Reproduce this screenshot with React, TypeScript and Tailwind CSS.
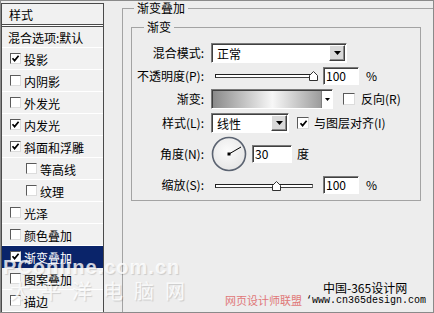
import type { ReactNode } from 'react';

type Row = { label: string; on?: boolean; sub?: boolean; active?: boolean };

const rows: Row[] = [
  { label: '投影', on: true },
  { label: '内阴影' },
  { label: '外发光' },
  { label: '内发光', on: true },
  { label: '斜面和浮雕', on: true },
  { label: '等高线', sub: true },
  { label: '纹理', sub: true },
  { label: '光泽' },
  { label: '颜色叠加' },
  { label: '渐变叠加', on: true, active: true },
  { label: '图案叠加' },
  { label: '描边' },
];

function Check({ on, big }: { on?: boolean; big?: boolean }) {
  return (
    <span
      className={`flex shrink-0 items-center justify-center border border-t-[#5a5a5a] border-l-[#5a5a5a] border-r-[#dcdcdc] border-b-[#dcdcdc] bg-white ${
        big ? 'h-[12px] w-[12px]' : 'h-[11px] w-[11px]'
      }`}
    >
      {on && (
        <svg viewBox="0 0 9 9" className="h-[9px] w-[9px]">
          <path d="M1.5 4.2 L3.6 6.6 L7.6 1.8" fill="none" stroke="#000" strokeWidth="1.7" />
        </svg>
      )}
    </span>
  );
}

function Arrow() {
  return (
    <svg viewBox="0 0 7 4" className="h-[4px] w-[7px]">
      <path d="M0 0 H7 L3.5 4 Z" fill="#000" />
    </svg>
  );
}

function Combo({ text, width }: { text: string; width: string }) {
  return (
    <div
      className={`flex h-[20px] ${width} border border-t-[#7a7a7a] border-l-[#7a7a7a] border-r-white border-b-white bg-white shadow-[inset_1px_1px_0_#404040]`}
    >
      <span className="flex flex-1 items-center pl-[5px] pt-[1px]">{text}</span>
      <span className="mt-[1px] mr-[1px] mb-[1px] flex w-[16px] items-center justify-center border border-t-white border-l-white border-r-[#404040] border-b-[#404040] bg-[#d9d9d9] shadow-[inset_-1px_-1px_0_#8a8a8a]">
        <Arrow />
      </span>
    </div>
  );
}

function Field({ text, width }: { text: string; width: string }) {
  return (
    <div
      className={`flex h-[18px] ${width} items-center border border-t-[#7a7a7a] border-l-[#7a7a7a] border-r-white border-b-white bg-white pl-[2px] shadow-[inset_1px_1px_0_#404040]`}
    >
      {text}
    </div>
  );
}

function Slider({ pos }: { pos: number }) {
  return (
    <div className="relative h-full w-[108px]">
      <div className="absolute top-[8px] left-[4px] h-[4px] w-[98px] border border-t-[#202020] border-l-[#202020] border-r-[#707070] border-b-[#404040] bg-white" />
      <svg viewBox="0 0 9 10" className="absolute top-[5px] h-[10px] w-[9px]" style={{ left: pos }}>
        <path d="M4.5 0.5 L8.5 4.5 V9.5 H0.5 V4.5 Z" fill="#fff" stroke="#303030" strokeWidth="1" />
      </svg>
    </div>
  );
}

function FormRow({ label, className, children }: { label: string; className: string; children: ReactNode }) {
  return (
    <div className={`flex items-center ${className}`}>
      <span className="w-[73px] shrink-0 pr-[1px] text-right">{label}</span>
      <div className="ml-[6px] flex h-full items-center">{children}</div>
    </div>
  );
}

export default function App() {
  return (
    <div className='relative flex h-[313px] w-[434px] overflow-hidden border border-[#8a8a8a] bg-[#ededed] font-["Noto_Sans_CJK_SC",sans-serif] text-[12px] leading-[14px] text-black'>
      {/* style list */}
      <div className="mt-[2px] flex w-[103px] shrink-0 flex-col border-t border-l border-r border-[#4a4a4a] bg-[#f1f1f1]">
        <div className="flex h-[21px] items-center pt-[1px] pl-[7px]">样式</div>
        <div className="h-[3px] border-y border-[#4a4a4a] bg-white" />
        <div className="flex h-[22px] items-center border-b border-white pt-[2px] pl-[6px]">混合选项:默认</div>
        {rows.map((r) => (
          <div
            key={r.label}
            className={`flex h-[22px] shrink-0 items-center gap-[3px] border-b ${
              r.active ? 'border-[#0a246a] bg-[#0a246a] text-white' : 'border-white'
            } ${r.sub ? 'pl-[24px]' : 'pl-[8px]'}`}
          >
            <Check on={r.on} />
            <span className="pt-[2px]">{r.label}</span>
          </div>
        ))}
      </div>

      {/* options */}
      <div className="flex-1 pl-[18px]">
        <fieldset className="h-[330px] border-t border-l border-[#a3a3a3]">
          <legend className="ml-[11px] px-[3px] leading-[14px]">渐变叠加</legend>
          <fieldset className="mt-[5px] ml-[8px] w-[290px] border border-[#a3a3a3] pb-[6px]">
            <legend className="ml-[12px] px-[3px] leading-[14px]">渐变</legend>

            <FormRow label="混合模式:" className="mt-[9px] h-[20px]">
              <Combo text="正常" width="w-[136px]" />
            </FormRow>

            <FormRow label="不透明度(P):" className="mt-[3px] h-[19px]">
              <Slider pos={98} />
              <div className="ml-[4px]">
                <Field text="100" width="w-[36px]" />
              </div>
              <span className="ml-[7px]">%</span>
            </FormRow>

            <FormRow label="渐变:" className="mt-[4px] h-[20px]">
              <div className="flex h-[20px] w-[122px] border border-t-[#7a7a7a] border-l-[#7a7a7a] border-r-white border-b-white bg-white shadow-[inset_1px_1px_0_#404040]">
                <div className="mt-[1px] ml-[1px] flex-1 bg-[linear-gradient(to_right,#8a8a8a,#f7f7f7_55%,#9c9c9c)]" />
                <div className="mt-[1px] flex w-[11px] items-center justify-center border-l border-[#808080] bg-white">
                  <svg viewBox="0 0 5 3" className="h-[3px] w-[5px]">
                    <path d="M0 0 H5 L2.5 3 Z" fill="#000" />
                  </svg>
                </div>
              </div>
              <span className="ml-[10px]">
                <Check big />
              </span>
              <span className="ml-[6px]">反向(R)</span>
            </FormRow>

            <FormRow label="样式(L):" className="mt-[4px] h-[20px]">
              <Combo text="线性" width="w-[78px]" />
              <span className="ml-[8px]">
                <Check on big />
              </span>
              <span className="ml-[5px]">与图层对齐(I)</span>
            </FormRow>

            <FormRow label="角度(N):" className="mt-[3px] h-[36px]">
              <svg viewBox="0 0 36 36" className="h-[36px] w-[36px]">
                <defs>
                  <radialGradient id="dial" cx="0.45" cy="0.4" r="0.6">
                    <stop offset="0" stopColor="#fbfbfb" />
                    <stop offset="1" stopColor="#e6e6e6" />
                  </radialGradient>
                </defs>
                <circle cx="18" cy="18" r="16.5" fill="url(#dial)" stroke="#5b6371" strokeWidth="1.6" />
                <line x1="18" y1="18" x2="30" y2="11" stroke="#000" strokeWidth="1" />
                <rect x="16.5" y="16.5" width="3" height="3" fill="#000" />
              </svg>
              <div className="ml-[5px]">
                <Field text="30" width="w-[40px]" />
              </div>
              <span className="ml-[5px]">度</span>
            </FormRow>

            <FormRow label="缩放(S):" className="mt-[4px] h-[18px]">
              <Slider pos={61} />
              <div className="ml-[4px]">
                <Field text="100" width="w-[36px]" />
              </div>
              <span className="ml-[7px]">%</span>
            </FormRow>
          </fieldset>
        </fieldset>
      </div>

      {/* watermarks laid over the dialog */}
      <div className='pointer-events-none absolute top-[256px] left-[2px] font-["Liberation_Sans",sans-serif] text-[20px] leading-[20px] font-bold tracking-[1px] text-white/80 [text-shadow:1px_1px_1px_rgba(0,0,0,0.15)]'>
        PConline.com.cn
      </div>
      <div className="pointer-events-none absolute top-[279px] left-[9px] text-[20px] leading-[22px] tracking-[11px] text-white/80 [text-shadow:1px_1px_1px_rgba(0,0,0,0.15)]">
        太平洋电脑网
      </div>
      <div className="pointer-events-none absolute top-[280px] left-[322px] text-[12px] leading-[14px] text-black">中国-365设计网</div>
      <div className="pointer-events-none absolute top-[293px] left-[224px] text-[11px] leading-[12px] text-[#e07878]">网页设计师联盟</div>
      <div className='pointer-events-none absolute top-[294px] left-[305px] font-["Liberation_Mono",monospace] text-[10px] leading-[12px] text-black'>
        ‘www.cn365design.com
      </div>
    </div>
  );
}
